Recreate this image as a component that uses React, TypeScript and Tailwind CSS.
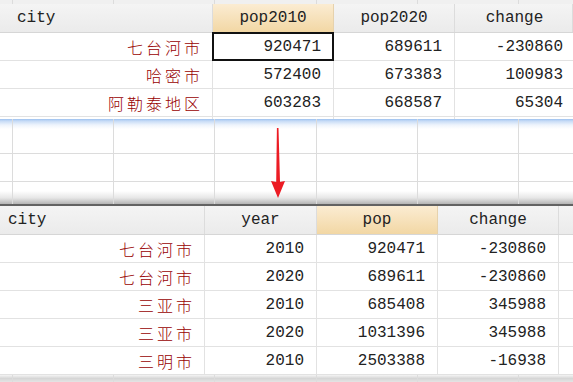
import React from "react";

const bgCols = [13, 101, 101, 102, 101, 101, 54];

type TopRow = { city: string; a: string; b: string; c: string };
type BottomRow = { city: string; year: string; pop: string; change: string };

const topRows: TopRow[] = [
  { city: "七台河市", a: "920471", b: "689611", c: "-230860" },
  { city: "哈密市", a: "572400", b: "673383", c: "100983" },
  { city: "阿勒泰地区", a: "603283", b: "668587", c: "65304" },
];

const bottomRows: BottomRow[] = [
  { city: "七台河市", year: "2010", pop: "920471", change: "-230860" },
  { city: "七台河市", year: "2020", pop: "689611", change: "-230860" },
  { city: "三亚市", year: "2010", pop: "685408", change: "345988" },
  { city: "三亚市", year: "2020", pop: "1031396", change: "345988" },
  { city: "三明市", year: "2010", pop: "2503388", change: "-16938" },
];

const headCell =
  "flex h-full items-center justify-center border-r border-[#dcdcdc] bg-linear-to-b from-[#f4f4f4] to-[#ebebeb]";
const hotCell =
  "flex h-full items-center justify-center border-r border-[#e6d2ad] bg-linear-to-b from-[#fbecd2] to-[#f2d7a4]";
const cell = "flex h-full items-center justify-end border-r border-[#e2e2e2] pr-3";
const cityCell =
  "flex h-full items-center justify-end border-r border-[#e2e2e2] pr-[9px] font-['Noto_Sans_CJK_SC',sans-serif] text-[16px] font-light tracking-[3px] text-[#980000]";

function BgRow({ h, border }: { h: string; border?: boolean }) {
  return (
    <div className={`flex ${h} ${border ? "border-b border-[#dcdcdc]" : ""}`}>
      {bgCols.map((w, i) => (
        <div
          key={i}
          style={{ width: w }}
          className={i < bgCols.length - 1 ? "h-full shrink-0 border-r border-[#dcdcdc]" : "h-full flex-1"}
        />
      ))}
    </div>
  );
}

function TopTable() {
  return (
    <div className="bg-white">
      <div className="flex h-[29px] border-b border-[#d6d6d6] text-[#222]">
        <div className={`${headCell} w-[213px] justify-start! pl-[17px]`}>city</div>
        <div className={`${hotCell} w-[121px]`}>pop2010</div>
        <div className={`${headCell} w-[121px]`}>pop2020</div>
        <div className={`${headCell} flex-1 pl-[2px]`}>change</div>
      </div>
      {topRows.map((r, i) => (
        <div key={r.city} className="flex h-[28px] border-b border-[#e2e2e2] text-[#222]">
          <div className={`${cityCell} w-[213px]`}>{r.city}</div>
          <div className={`${cell} relative w-[121px]`}>
            {i === 0 && (
              <span className="absolute -top-px -right-px -bottom-px -left-px border-2 border-[#111]" />
            )}
            {r.a}
          </div>
          <div className={`${cell} w-[121px]`}>{r.b}</div>
          <div className="flex h-full flex-1 items-center justify-end pr-[10px]">{r.c}</div>
        </div>
      ))}
      <div className="flex h-[2px]">
        <div className="w-[213px] border-r border-[#e2e2e2]" />
        <div className="w-[121px] border-r border-[#e2e2e2]" />
        <div className="w-[121px] border-r border-[#e2e2e2]" />
        <div className="flex-1" />
      </div>
    </div>
  );
}

function BottomTable() {
  return (
    <div className="bg-white">
      <div className="flex h-[29px] border-b border-[#d6d6d6] text-[#222]">
        <div className={`${headCell} w-[205px] justify-start! pl-[8px]`}>city</div>
        <div className={`${headCell} w-[112px]`}>year</div>
        <div className={`${hotCell} w-[121px]`}>pop</div>
        <div className={`${headCell} w-[121px]`}>change</div>
        <div className={`${headCell} flex-1 border-r-0`} />
      </div>
      {bottomRows.map((r, i) => (
        <div key={i} className="flex h-[28px] border-b border-[#e2e2e2] text-[#222]">
          <div className={`${cityCell} w-[205px]`}>{r.city}</div>
          <div className={`${cell} w-[112px]`}>{r.year}</div>
          <div className={`${cell} w-[121px]`}>{r.pop}</div>
          <div className={`${cell} w-[121px]`}>{r.change}</div>
          <div className="flex-1" />
        </div>
      ))}
    </div>
  );
}

export default function App() {
  return (
    <div className="h-[382px] w-[573px] overflow-hidden bg-white font-['Liberation_Mono','Noto_Sans_CJK_SC',monospace] text-[16px]">
      <div className="bg-[#f0f0f0]">
        <BgRow h="h-[4px]" />
      </div>
      <TopTable />
      <div className="relative h-[85px] bg-[linear-gradient(to_bottom,#9dc1ef_0px,#c6dbf6_2px,#eef4fc_6px,#ffffff_10px,#ffffff_72px,#e6e6e6_79px,#b4b4b4_85px)]">
        <BgRow h="h-[35px]" border />
        <BgRow h="h-[28px]" border />
        <BgRow h="h-[22px]" />
        <svg className="absolute top-0 left-0" width="573" height="85" viewBox="0 0 573 85">
          <polygon
            points="276.9,9 278.5,9 280,63 285,62 278,79 271,62 276.2,63"
            fill="#ec1c24"
          />
        </svg>
      </div>
      <div className="h-[2px] bg-[#626262]" />
      <BottomTable />
      <div className="bg-linear-to-b from-[#f4f4f4] via-[#d6d6d6] to-[#e4e4e4]">
        <BgRow h="h-[7px]" />
      </div>
    </div>
  );
}
